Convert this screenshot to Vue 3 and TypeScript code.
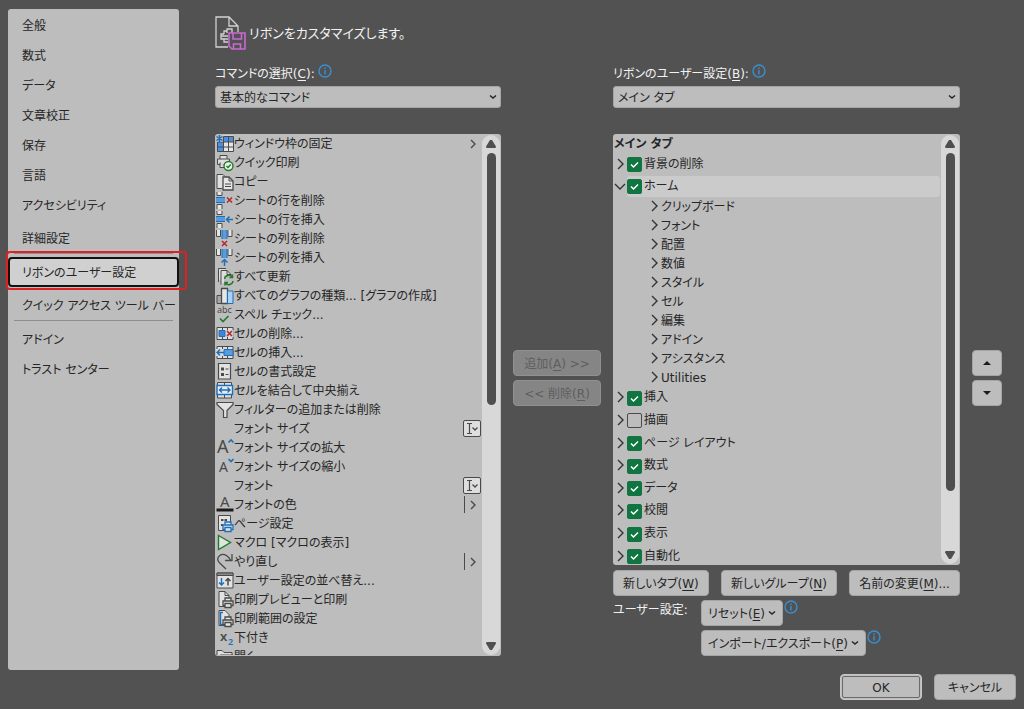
<script setup lang="ts">
import { ref } from 'vue'

interface Command {
  label: string
  icon?: string
  tail?: 'menu' | 'split' | 'combo'
}
interface Tab {
  label: string
  checked: boolean
}

const navGroups: string[][] = [
  ['全般', '数式', 'データ', '文章校正', '保存', '言語', 'アクセシビリティ', '詳細設定'],
  ['リボンのユーザー設定', 'クイック アクセス ツール バー'],
  ['アドイン', 'トラスト センター'],
]
const currentNav = ref('リボンのユーザー設定')

const G = '#4a4a4a'
const B = '#1f6fb8'
const cellGrid = `<path d="M1 2.5h16v12H1zM6.5 2.5v12M11.5 2.5v12" fill="#dedede" stroke="${G}"/>`
const cross = (x: number, y: number) =>
  `<path d="M${x} ${y}l5 5m0-5l-5 5" fill="none" stroke="#b3262e" stroke-width="1.5"/>`
const rowBars = `<path d="M1 0v3.5h5V0M1 17v-4.500h5V17" fill="#e4e4e4" stroke="${G}"/><path d="M0 5h9v6H0z" fill="#5b9bdb"/><path d="M0 5.500h9M0 10.500h9" stroke="${B}"/>`
const colBars = `<path d="M.5 0v6.500h4V0M16 0v6.500h-4V0" fill="#e4e4e4" stroke="${G}"/><path d="M6 0h5v9H6z" fill="#5b9bdb"/><path d="M6 0v9M11 0v9" stroke="${B}"/>`
const printer = (c: string) =>
  `<path d="M9 10V7h6v3M9 14.500H7V10h10v4.500h-2M9 12.500h6v4H9z" fill="#e4e4e4" stroke="${c}" stroke-width="1.300"/>`

const icons: Record<string, string> = {
  freeze: `<path d="M1.500.5h16v16h-16z" fill="#e6e6e6"/><path d="M8 2h9.500v5H8zM1.500 7H7v9.500H1.500z" fill="#4f8fe0"/><path d="M7.500 1.500h10v15h-16V7M1.500 7h16M1.500 12h16M7.500 1.500v15M12.500 1.500v15" fill="none" stroke="${G}"/><path d="M0 0h7v6.500H0z" fill="#bdbdbd"/><path d="M3.500 0v7M.5 1.500l6 4M6.500 1.500l-6 4" stroke="${B}" stroke-width="1.500"/>`,
  quickPrint: `<path d="M4 5V1.500h7V5M4 10.500H1.500V5h12v4M4 8.500v5h5" fill="#dedede" stroke="${G}"/><circle cx="12.500" cy="12" r="4.500" fill="#e8f2e8" stroke="#217a2c" stroke-width="1.400"/><path d="M10.500 12l1.500 1.600 2.800-3" fill="none" stroke="#217a2c" stroke-width="1.400"/>`,
  copy: `<path d="M6 15.500H1V1.500h6l2 2" fill="#e0e0e0" stroke="${G}"/><path d="M7 4h6l4 4v9H7z" fill="#e6e6e6" stroke="${G}" stroke-width="1.300"/><path d="M13 4v4h4M9 11h6M9 13.500h6" fill="none" stroke="${G}"/>`,
  rowDelete: rowBars + cross(11, 5.5),
  rowInsert: rowBars + `<path d="M17 8.500h-6M13.500 5.500l-3 3 3 3" fill="none" stroke="${B}" stroke-width="1.500"/>`,
  colDelete: colBars + cross(6, 11),
  colInsert: colBars + `<path d="M8.500 17v-6M5.500 13.500l3-3 3 3" fill="none" stroke="${B}" stroke-width="1.500"/>`,
  refresh: `<path d="M2.500 14V.5H10M5 16.500v-14h6l4 4V9" fill="#dedede" stroke="${G}"/><path d="M11 2.500v4h4" fill="none" stroke="${G}"/><path d="M8 7.500h9.500v9H8z" fill="#bdbdbd"/><path d="M8.500 11a4.200 4.200 0 0 1 7.500-2M16.500 6.500V9.500h-3M17 13a4.200 4.200 0 0 1-7.500 2M9 17.500v-3h3" fill="none" stroke="#217a2c" stroke-width="1.500"/>`,
  chart: `<path d="M1 8.500h4.500v8H1z" fill="#a8a8a8" stroke="${G}"/><path d="M5.500 1.500h6v15h-6z" fill="#e6e6e6" stroke="${G}" stroke-width="1.300"/><path d="M11.500 4h5.500v12.500h-5.500z" fill="#a9d2f3" stroke="${B}"/>`,
  spell: `<text x="1" y="7" font-size="9" fill="${G}">abc</text><path d="M4 12.500l3 3 5.500-5.500" fill="none" stroke="#217a2c" stroke-width="1.700"/>`,
  cellDelete: cellGrid + `<path d="M3 5.500h6v6H3z" fill="#3f86d4" stroke="${B}"/><path d="M10 5h7.500v7H10z" fill="#d0d0d0"/>` + cross(11, 6),
  cellInsert: cellGrid + `<path d="M8 5.500h9v6H8z" fill="#5b9bdb" stroke="${B}"/><path d="M0 5h7v7H0z" fill="#d8d8d8"/><path d="M8 8.500H1M4 5.500l-3 3 3 3" fill="none" stroke="${B}" stroke-width="1.500"/>`,
  cellFormat: `<path d="M2.500.5h12v15.500h-12z" fill="#e2e2e2" stroke="${G}" stroke-width="1.200"/><path d="M5 4.500h3v3H5zM5 10h3v3H5z" fill="${G}"/><path d="M9.500 6h3M9.500 11.500h3" stroke="${G}"/>`,
  merge: `<path d="M1.500.5h14v15.500h-14zM8.500.5V16" fill="#dedede" stroke="${G}"/><path d="M1 3.500h15.500v9H1z" fill="#e9eef4" stroke="${B}" stroke-width="1.400"/><path d="M3.500 8h10.500M6 5.500L3.500 8 6 10.500M11.500 5.500L14 8l-2.500 2.500" fill="none" stroke="${B}" stroke-width="1.400"/>`,
  filter: `<path d="M1 1.500h16v2L11 9.500v7H7.500v-7L1 3.500z" fill="#e2e2e2" stroke="${G}" stroke-width="1.200"/>`,
  grow: `<text x="1" y="14" font-size="18" fill="${G}">A</text><path d="M12.500 3.500L15 1l2.500 2.500" fill="none" stroke="${B}" stroke-width="1.600"/>`,
  shrink: `<text x="3" y="14" font-size="14" fill="${G}">A</text><path d="M12.500 1L15 3.500 17.500 1" fill="none" stroke="${B}" stroke-width="1.600"/>`,
  fontColor: `<text x="4" y="11" font-size="15" fill="${G}">A</text><path d="M.5 12.500h17v3H.5z" fill="#1c1c1c"/>`,
  pageSetup: `<path d="M2.500.5h12v15h-12z" fill="#e2e2e2" stroke="${G}"/><path d="M5 4h2.500v2H5zM8.500 4H11v2H8.500zM5 9h2v2H5z" fill="${G}"/>` + printer(B),
  macro: `<path d="M2.500 1.500l12 7-12 7z" fill="#dfe6df" stroke="#217a2c" stroke-width="1.400"/>`,
  redo: `<path d="M10 16L3.500 9.800C-.8 5.500 4 .5 8.500 1.700 11.500 2.500 13 4.500 15 7.500M16 1v6.500H9" fill="none" stroke="${G}" stroke-width="1.300"/>`,
  sort: `<path d="M1 1h16v15H1z" fill="#e2e2e2" stroke="${G}"/><path d="M1 1h16v2.500H1z" fill="#8a8a8a" stroke="${G}"/><path d="M5.500 6v7M3 10.500L5.500 13 8 10.500" fill="none" stroke="${B}" stroke-width="1.500"/><path d="M12 13.500v-7M9.500 9L12 6.500 14.500 9" fill="none" stroke="${G}" stroke-width="1.500"/>`,
  preview: `<path d="M3 .5h6l4 4v11H3z" fill="#e2e2e2" stroke="${G}"/><path d="M9 .5v4h4" fill="none" stroke="${G}"/>` + printer(G),
  printArea: `<path d="M3 .5h6l4 4v11H3z" fill="#e2e2e2" stroke="${G}"/><path d="M7 2.500H4.500v12H7" fill="none" stroke="${B}" stroke-width="1.500"/>` + printer(G),
  subscript: `<text x="4" y="12" font-size="13" font-weight="600" fill="${G}">x</text><text x="12" y="16" font-size="9" font-weight="600" fill="${B}">2</text>`,
  open: `<path d="M1 14V2.500h5l2 2h8V14zM4 14V7h13" fill="#dedede" stroke="${G}"/>`,
}

const commands: Command[] = [
  { label: 'ウィンドウ枠の固定', icon: 'freeze', tail: 'menu' },
  { label: 'クイック印刷', icon: 'quickPrint' },
  { label: 'コピー', icon: 'copy' },
  { label: 'シートの行を削除', icon: 'rowDelete' },
  { label: 'シートの行を挿入', icon: 'rowInsert' },
  { label: 'シートの列を削除', icon: 'colDelete' },
  { label: 'シートの列を挿入', icon: 'colInsert' },
  { label: 'すべて更新', icon: 'refresh' },
  { label: 'すべてのグラフの種類... [グラフの作成]', icon: 'chart' },
  { label: 'スペル チェック...', icon: 'spell' },
  { label: 'セルの削除...', icon: 'cellDelete' },
  { label: 'セルの挿入...', icon: 'cellInsert' },
  { label: 'セルの書式設定', icon: 'cellFormat' },
  { label: 'セルを結合して中央揃え', icon: 'merge' },
  { label: 'フィルターの追加または削除', icon: 'filter' },
  { label: 'フォント サイズ', tail: 'combo' },
  { label: 'フォント サイズの拡大', icon: 'grow' },
  { label: 'フォント サイズの縮小', icon: 'shrink' },
  { label: 'フォント', tail: 'combo' },
  { label: 'フォントの色', icon: 'fontColor', tail: 'split' },
  { label: 'ページ設定', icon: 'pageSetup' },
  { label: 'マクロ [マクロの表示]', icon: 'macro' },
  { label: 'やり直し', icon: 'redo', tail: 'split' },
  { label: 'ユーザー設定の並べ替え...', icon: 'sort' },
  { label: '印刷プレビューと印刷', icon: 'preview' },
  { label: '印刷範囲の設定', icon: 'printArea' },
  { label: '下付き', icon: 'subscript' },
  { label: '開く', icon: 'open' },
]

const background = ref<Tab>({ label: '背景の削除', checked: true })
const home = ref<Tab>({ label: 'ホーム', checked: true })
const homeGroups = ['クリップボード', 'フォント', '配置', '数値', 'スタイル', 'セル', '編集', 'アドイン', 'アシスタンス', 'Utilities']
const otherTabs = ref<Tab[]>([
  { label: '挿入', checked: true },
  { label: '描画', checked: false },
  { label: 'ページ レイアウト', checked: true },
  { label: '数式', checked: true },
  { label: 'データ', checked: true },
  { label: '校閲', checked: true },
  { label: '表示', checked: true },
  { label: '自動化', checked: true },
])
</script>

<template>
  <div class="dialog">
    <div class="body">
      <nav class="side">
        <ul v-for="(group, g) in navGroups" :key="g">
          <li v-for="item in group" :key="item">
            <button type="button" :class="{ current: item === currentNav }" @click="currentNav = item">{{ item }}</button>
          </li>
        </ul>
        <div class="callout"></div>
      </nav>

      <main class="content">
        <header class="title">
          <svg width="32" height="36" viewBox="0 0 32 36" fill="none" stroke="#d2d2d2" stroke-width="1.3" aria-hidden="true">
            <path d="M13 32H1V2h13l9 9v6M14 2v9h9" />
            <path d="M12 18v-4h5v4M12 16H9v3M9 19H6v5h7M6 21h7M13 27H9v-3" />
            <path d="M14 18h16v16H17l-3-3zM18 18v6h8.500v-6M18.500 34v-5h7v5" stroke="#c969d2" fill="#525252" stroke-width="1.6" />
          </svg>
          <h1>リボンをカスタマイズします。</h1>
        </header>

        <div class="field left">
          <div class="caption">
            <label for="source">コマンドの選択(<u>C</u>):</label>
            <svg class="info" viewBox="0 0 14 14" role="img" aria-label="情報"><circle cx="7" cy="7" r="6" /><path d="M7 6v4.500M7 3.500v1.500" /></svg>
          </div>
          <div class="select">
            <select id="source"><option>基本的なコマンド</option></select>
            <svg viewBox="0 0 8 6" aria-hidden="true"><path d="M1 1.500l3 2.500 3-2.500" /></svg>
          </div>
        </div>

        <div class="field right">
          <div class="caption">
            <label for="target">リボンのユーザー設定(<u>B</u>):</label>
            <svg class="info" viewBox="0 0 14 14" role="img" aria-label="情報"><circle cx="7" cy="7" r="6" /><path d="M7 6v4.500M7 3.500v1.500" /></svg>
          </div>
          <div class="select">
            <select id="target"><option>メイン タブ</option></select>
            <svg viewBox="0 0 8 6" aria-hidden="true"><path d="M1 1.500l3 2.500 3-2.500" /></svg>
          </div>
        </div>

        <div class="list commands">
          <ul>
            <li v-for="c in commands" :key="c.label">
              <svg class="glyph" viewBox="0 0 18 19" aria-hidden="true" v-html="c.icon ? icons[c.icon] : ''"></svg>
              <span class="name">{{ c.label }}</span>
              <svg v-if="c.tail" class="tail" viewBox="0 0 18 19" aria-hidden="true">
                <template v-if="c.tail === 'combo'">
                  <rect x=".5" y=".5" width="17" height="16" rx="1.500" fill="#dedede" />
                  <path d="M4 3.500h2.500M6.500 3.500H9M4 13.500h5M6.500 3.500v10" stroke-width="1.200" />
                  <path d="M9.500 7.500L12 10l2.500-2.500" stroke-width="1.300" />
                </template>
                <template v-else>
                  <path v-if="c.tail === 'split'" d="M1.500 0v17" />
                  <path d="M8 5l4 4-4 4" stroke-width="1.400" />
                </template>
              </svg>
            </li>
          </ul>
          <div class="scroll" aria-hidden="true">
            <i class="up"></i>
            <div class="track"><div class="thumb" :style="{ height: '52%' }"></div></div>
            <i class="down"></i>
          </div>
        </div>

        <div class="transfer">
          <button type="button" class="btn" disabled>追加(<u>A</u>) &gt;&gt;</button>
          <button type="button" class="btn" disabled>&lt;&lt; 削除(<u>R</u>)</button>
        </div>

        <div class="target">
          <div class="list tree">
            <div class="nodes">
              <strong>メイン タブ</strong>
              <div class="node first">
                <button type="button" class="toggle" aria-label="展開"><svg viewBox="0 0 12 12"><path d="M4 1l5 5-5 5" /></svg></button>
                <label><input v-model="background.checked" type="checkbox" /><span>{{ background.label }}</span></label>
              </div>
              <div class="node home">
                <button type="button" class="toggle" aria-label="折りたたむ"><svg viewBox="0 0 12 12"><path d="M1 4l5 5 5-5" /></svg></button>
                <label><input v-model="home.checked" type="checkbox" /><span>{{ home.label }}</span></label>
              </div>
              <ul class="groups">
                <li v-for="g in homeGroups" :key="g">
                  <button type="button" class="toggle" aria-label="展開"><svg viewBox="0 0 12 12"><path d="M4 1l5 5-5 5" /></svg></button>
                  <span>{{ g }}</span>
                </li>
              </ul>
              <div class="rest">
                <div v-for="t in otherTabs" :key="t.label" class="node">
                  <button type="button" class="toggle" aria-label="展開"><svg viewBox="0 0 12 12"><path d="M4 1l5 5-5 5" /></svg></button>
                  <label><input v-model="t.checked" type="checkbox" /><span>{{ t.label }}</span></label>
                </div>
              </div>
            </div>
            <div class="scroll" aria-hidden="true">
              <i class="up"></i>
              <div class="track"><div class="thumb" :style="{ height: '86%' }"></div></div>
              <i class="down"></i>
            </div>
          </div>
          <div class="edit">
            <button type="button" class="btn">新しいタブ(<u>W</u>)</button>
            <button type="button" class="btn">新しいグループ(<u>N</u>)</button>
            <button type="button" class="btn">名前の変更(<u>M</u>)...</button>
          </div>
          <div class="custom">
            <span class="custom-label">ユーザー設定:</span>
            <div class="custom-row">
              <button type="button" class="btn">リセット(<u>E</u>)<svg viewBox="0 0 8 6" aria-hidden="true"><path d="M1 1.500l3 2.500 3-2.500" /></svg></button>
              <svg class="info" viewBox="0 0 14 14" role="img" aria-label="情報"><circle cx="7" cy="7" r="6" /><path d="M7 6v4.500M7 3.500v1.500" /></svg>
            </div>
            <div class="custom-row">
              <button type="button" class="btn">インポート/エクスポート(<u>P</u>)<svg viewBox="0 0 8 6" aria-hidden="true"><path d="M1 1.500l3 2.500 3-2.500" /></svg></button>
              <svg class="info" viewBox="0 0 14 14" role="img" aria-label="情報"><circle cx="7" cy="7" r="6" /><path d="M7 6v4.500M7 3.500v1.500" /></svg>
            </div>
          </div>
        </div>

        <div class="order">
          <button type="button" class="btn" aria-label="上へ"><svg viewBox="0 0 8 4"><path d="M0 4l4-4 4 4z" /></svg></button>
          <button type="button" class="btn" aria-label="下へ"><svg viewBox="0 0 8 4"><path d="M0 0l4 4 4-4z" /></svg></button>
        </div>
      </main>
    </div>

    <footer class="footer">
      <button type="button" class="btn ok">OK</button>
      <button type="button" class="btn">キャンセル</button>
    </footer>
  </div>
</template>

<style>
body {
  margin: 0;
  background: #525252;
}
</style>

<style scoped>
* {
  box-sizing: border-box;
}
.dialog {
  display: flex;
  flex-direction: column;
  height: 100vh;
  min-height: 680px;
  padding: 9px 8px;
  background: #525252;
  color: #262626;
  font: 12px/19px 'DejaVu Sans', 'Noto Sans CJK JP', sans-serif;
  font-feature-settings: 'palt';
}
button,
select,
input {
  margin: 0;
  font: inherit;
  font-feature-settings: inherit;
  color: inherit;
}
ul {
  margin: 0;
  padding: 0;
  list-style: none;
}
u {
  text-underline-offset: 2px;
}
.body {
  display: flex;
  flex: 1;
  min-height: 0;
}

.side {
  position: relative;
  flex: none;
  width: 171px;
  padding-top: 1px;
  border-radius: 3px;
  background: #bdbdbd;
}
.side ul + ul::before {
  content: '';
  display: block;
  height: 1px;
  margin: 0 6px 3px;
  background: #8e8e8e;
}
.side li:last-child {
  margin-top: 3px;
}
.side ul:last-of-type li:last-child {
  margin-top: 0;
}
.side button {
  display: block;
  width: 100%;
  height: 30px;
  padding: 2px 12px 0;
  border: 2px solid transparent;
  border-radius: 4px;
  background: none;
  text-align: left;
  white-space: nowrap;
}
.side button.current {
  border-color: #111;
  background: #d0d0d0;
}
.callout {
  position: absolute;
  top: 242px;
  left: -2px;
  width: 181px;
  height: 39px;
  border: 2px solid #dc2222;
  border-radius: 4px;
  pointer-events: none;
}

.content {
  display: grid;
  flex: 1;
  grid-template-columns: minmax(0, 286fr) 88px minmax(0, 347fr) 30px;
  grid-template-rows: 44px 81px minmax(0, 1fr);
  column-gap: 12px;
  padding: 0 14px 14px 36px;
}
.title {
  grid-column: 1 / -1;
  display: flex;
  align-items: center;
  gap: 2px;
  padding-top: 4px;
  color: #f2f2f2;
}
.title h1 {
  margin: 0;
  font-size: 13px;
  font-weight: 400;
}
.field {
  padding-top: 10px;
}
.field.left {
  grid-column: 1;
}
.field.right {
  grid-column: 3;
}
.caption {
  display: flex;
  gap: 3px;
  height: 23px;
  color: #f2f2f2;
}
.caption label {
  padding-top: 2px;
}
.info {
  flex: none;
  width: 14px;
  height: 14px;
  fill: none;
  stroke: #3a8fd0;
  stroke-width: 1.4;
}
.caption .info {
  margin-top: 1px;
}
.select {
  position: relative;
}
.select select {
  display: block;
  width: 100%;
  height: 22px;
  padding: 2px 24px 0 4px;
  border: 1px solid #a5a5a5;
  border-radius: 3px;
  background: #bdbdbd;
  appearance: none;
}
.select svg {
  position: absolute;
  top: 8px;
  right: 4px;
  width: 8px;
  height: 6px;
  pointer-events: none;
}
.select svg,
.custom .btn svg {
  fill: none;
  stroke: #262626;
  stroke-width: 1.5;
}

.list {
  display: flex;
  min-height: 0;
  padding: 1px;
  border-radius: 3px;
  background: #bdbdbd;
  overflow: hidden;
}
.commands {
  grid-column: 1;
}
.commands ul {
  flex: 1;
  min-width: 0;
  overflow: hidden;
}
.commands li {
  display: flex;
  height: 19px;
  white-space: nowrap;
}
.glyph,
.tail {
  flex: none;
  width: 18px;
  height: 19px;
  overflow: visible;
}
.glyph {
  font-family: 'Noto Sans', sans-serif;
}
.name {
  flex: 1;
}
.tail {
  margin-right: 1px;
  fill: none;
  stroke: #4a4a4a;
}
.scroll {
  display: flex;
  flex: none;
  flex-direction: column;
  align-items: center;
  width: 18px;
  padding: 5px 0;
  border-radius: 9px;
  background: #d8d8d8;
}
.scroll i {
  width: 10px;
  height: 8px;
  background: #4f4f4f;
}
.scroll .up {
  clip-path: polygon(40% 0, 60% 0, 100% 80%, 95% 100%, 5% 100%, 0 80%);
}
.scroll .down {
  clip-path: polygon(5% 0, 95% 0, 100% 20%, 60% 100%, 40% 100%, 0 20%);
}
.track {
  flex: 1;
  padding: 5px 0;
}
.thumb {
  width: 9px;
  border-radius: 5px;
  background: #4f4f4f;
}

.btn {
  height: 26px;
  padding: 2px 0 0;
  border: 1px solid #a5a5a5;
  border-radius: 4px;
  background: #bdbdbd;
  white-space: nowrap;
}
.transfer,
.order {
  display: flex;
  flex-direction: column;
  justify-content: center;
  gap: 4px;
  padding-bottom: 34px;
}
.transfer .btn {
  border-color: #909090;
  background: #858585;
  color: #5e5e5e;
}
.order .btn {
  display: flex;
  align-items: center;
  justify-content: center;
  padding: 0;
}
.order svg {
  width: 8px;
  height: 4px;
  fill: #1c1c1c;
}

.target {
  display: flex;
  flex-direction: column;
  min-height: 0;
}
.tree {
  flex: 1;
}
.nodes {
  display: flex;
  flex: 1;
  flex-direction: column;
  min-width: 0;
}
.nodes strong {
  flex: none;
  height: 18px;
}
.node {
  display: flex;
  align-items: center;
}
.node.first {
  flex: none;
  height: 23px;
}
.node.home {
  flex: none;
  height: 21px;
}
.node label {
  display: flex;
  flex: 1;
  align-items: center;
  gap: 2px;
  height: 21px;
  margin-right: 1px;
  border-radius: 3px;
}
.node.home label {
  background: #cbcbcb;
}
.node label span {
  padding-bottom: 1px;
}
.node input {
  width: 15px;
  height: 15px;
  border: 1px solid #4a4a4a;
  border-radius: 2px;
  appearance: none;
}
.node input:checked {
  border-color: #107540;
  background: #107540 url("data:image/svg+xml,%3Csvg xmlns='http://www.w3.org/2000/svg' viewBox='0 0 13 13' fill='none' stroke='%23fff' stroke-width='1.500'%3E%3Cpath d='M3 6.500l2.500 2.500 4.500-4.500'/%3E%3C/svg%3E") center / 13px 13px;
}
.toggle {
  display: flex;
  align-items: center;
  flex: none;
  width: 13px;
  height: 19px;
  padding: 0 0 2px;
  border: 0;
  background: none;
}
.toggle svg {
  width: 12px;
  height: 12px;
  fill: none;
  stroke: #333;
  stroke-width: 1.4;
}
.groups {
  flex: none;
  padding-left: 34px;
}
.groups li {
  display: flex;
  height: 19px;
  line-height: 21px;
}
.rest {
  display: flex;
  flex: 1;
  flex-direction: column;
  margin-bottom: -4px;
}
.rest .node {
  flex: 1;
}
.edit {
  display: flex;
  gap: 12px;
  padding-top: 5px;
}
.edit .btn {
  flex: 1 1 auto;
}
.custom {
  display: grid;
  grid-template-columns: 88px 1fr;
  row-gap: 4px;
  padding-top: 4px;
}
.custom-label {
  padding-top: 1px;
  color: #f2f2f2;
}
.custom-row {
  grid-column: 2;
  display: flex;
  gap: 1px;
}
.custom .btn {
  padding: 2px 6px 0;
}
.custom .btn svg {
  width: 8px;
  height: 6px;
  margin-left: 3px;
  vertical-align: 2px;
}
.footer {
  display: flex;
  justify-content: flex-end;
  gap: 12px;
  padding-top: 4px;
}
.footer .btn {
  width: 82px;
}
.footer .ok {
  border-color: #c8c8c8;
  outline: 1px solid #6a6a6a;
  outline-offset: -3px;
}
</style>
